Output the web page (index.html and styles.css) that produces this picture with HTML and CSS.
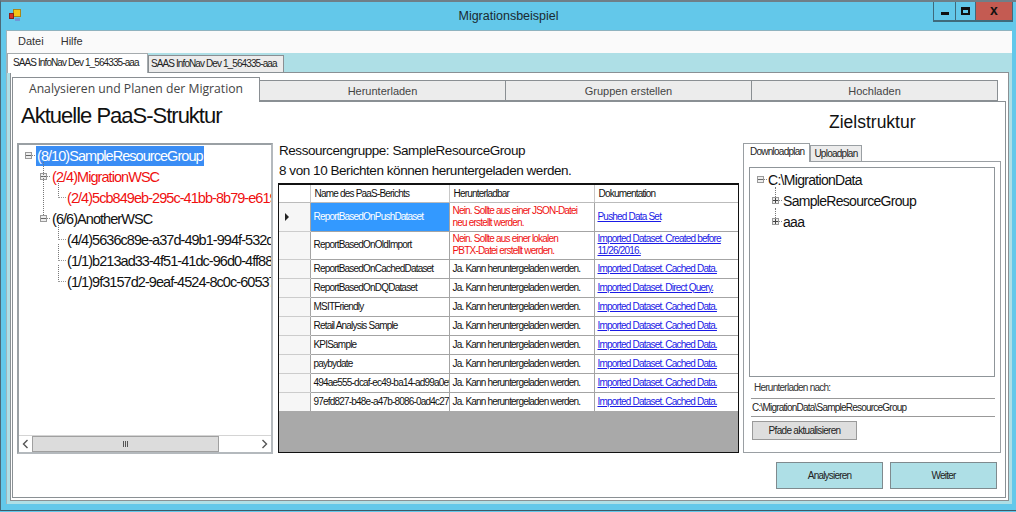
FILE: index.html
```html
<!DOCTYPE html>
<html lang="de">
<head>
  <meta charset="UTF-8" />
  <title>Migrationsbeispiel</title>
  <link rel="stylesheet" href="styles.css">
</head>
<body>

<div class="window">
  <div class="titlebar">
    <svg class="app-icon" width="14" height="14" viewBox="0 0 14 14">
      <rect x="5.5" y="1.5" width="7" height="7" fill="#f5c518" stroke="#a8861a"/>
      <rect x="1.5" y="5.5" width="4" height="5" fill="#d8322a" stroke="#8a1f1a"/>
      <rect x="7" y="10" width="5" height="3" fill="#6f97d8"/>
    </svg>
    <div class="title">Migrationsbeispiel</div>
    <div class="controls">
      <div class="ctl ctl-min"><span class="min-glyph"></span></div>
      <div class="ctl ctl-max"><span class="max-glyph"></span></div>
      <div class="ctl ctl-close">x</div>
    </div>
  </div>

  <div class="client">
    <div class="menubar">
      <span>Datei</span>
      <span>Hilfe</span>
    </div>

    <div class="outer-tabs">
      <div class="otab active">SAAS InfoNav Dev 1_564335-aaa</div>
      <div class="otab">SAAS InfoNav Dev 1_564335-aaa</div>
    </div>

    <div class="outer-page">
      <div class="inner-tabs">
        <div class="itab active">Analysieren und Planen der Migration</div>
        <div class="itab">Herunterladen</div>
        <div class="itab">Gruppen erstellen</div>
        <div class="itab">Hochladen</div>
      </div>

      <div class="inner-page">
        <div class="columns">
          <!-- left tree -->
          <div class="col-left">
            <h1 class="heading">Aktuelle PaaS-Struktur</h1>
            <div class="tree-box">
              <div class="tree">
                <div class="node lvl0"><span class="exp minus"></span><span class="label selected">(8/10)SampleResourceGroup</span></div>
                <div class="node lvl1 red"><span class="exp minus"></span><span class="label">(2/4)MigrationWSC</span></div>
                <div class="node lvl2 red"><span class="label">(2/4)5cb849eb-295c-41bb-8b79-e6197a2c10d4</span></div>
                <div class="node lvl1 tall"><span class="exp minus"></span><span class="label">(6/6)AnotherWSC</span></div>
                <div class="node lvl2"><span class="label">(4/4)5636c89e-a37d-49b1-994f-532d8e10b7c2</span></div>
                <div class="node lvl2"><span class="label">(1/1)b213ad33-4f51-41dc-96d0-4ff88c3e21a9</span></div>
                <div class="node lvl2"><span class="label">(1/1)9f3157d2-9eaf-4524-8c0c-60537b1de44f</span></div>
              </div>
              <div class="hscroll">
                <div class="sb-btn"><svg width="7" height="10" viewBox="0 0 7 10"><path d="M5.5 1 L1.5 5 L5.5 9" fill="none" stroke="#555" stroke-width="1.4"/></svg></div>
                <div class="sb-thumb"><span></span><span></span><span></span></div>
                <div class="sb-track"></div>
                <div class="sb-btn"><svg width="7" height="10" viewBox="0 0 7 10"><path d="M1.5 1 L5.5 5 L1.5 9" fill="none" stroke="#555" stroke-width="1.4"/></svg></div>
              </div>
            </div>
          </div>

          <!-- middle report grid -->
          <div class="col-mid">
            <p class="info">Ressourcengruppe: SampleResourceGroup</p>
            <p class="info">8 von 10 Berichten können heruntergeladen werden.</p>
            <div class="grid-box">
              <table class="grid">
                <colgroup><col class="c0"><col class="c1"><col class="c2"><col class="c3"></colgroup>
                <thead>
                  <tr class="h17"><th></th><th>Name des PaaS-Berichts</th><th>Herunterladbar</th><th>Dokumentation</th></tr>
                </thead>
                <tbody>
                  <tr class="h29"><td class="rowhead"><span class="pointer"></span></td><td class="sel">ReportBasedOnPushDataset</td><td class="no">Nein. Sollte aus einer JSON-Datei<br>neu erstellt werden.</td><td><a href="#">Pushed Data Set </a></td></tr>
                  <tr class="h28"><td class="rowhead"></td><td>ReportBasedOnOldImport</td><td class="no">Nein. Sollte aus einer lokalen<br>PBTX-Datei erstellt werden.</td><td><a href="#">Imported Dataset. Created before 11/26/2016.</a></td></tr>
                  <tr class="h19"><td class="rowhead"></td><td>ReportBasedOnCachedDataset</td><td>Ja. Kann heruntergeladen werden.</td><td><a href="#">Imported Dataset. Cached Data.</a></td></tr>
                  <tr class="h19"><td class="rowhead"></td><td>ReportBasedOnDQDataset</td><td>Ja. Kann heruntergeladen werden.</td><td><a href="#">Imported Dataset. Direct Query.</a></td></tr>
                  <tr class="h19"><td class="rowhead"></td><td>MSITFriendly</td><td>Ja. Kann heruntergeladen werden.</td><td><a href="#">Imported Dataset. Cached Data.</a></td></tr>
                  <tr class="h19"><td class="rowhead"></td><td>Retail Analysis Sample</td><td>Ja. Kann heruntergeladen werden.</td><td><a href="#">Imported Dataset. Cached Data.</a></td></tr>
                  <tr class="h19"><td class="rowhead"></td><td>KPISample</td><td>Ja. Kann heruntergeladen werden.</td><td><a href="#">Imported Dataset. Cached Data.</a></td></tr>
                  <tr class="h19"><td class="rowhead"></td><td>paybydate</td><td>Ja. Kann heruntergeladen werden.</td><td><a href="#">Imported Dataset. Cached Data.</a></td></tr>
                  <tr class="h19"><td class="rowhead"></td><td>494ae555-dcaf-ec49-ba14-ad99a0ef12c3</td><td>Ja. Kann heruntergeladen werden.</td><td><a href="#">Imported Dataset. Cached Data.</a></td></tr>
                  <tr class="h19"><td class="rowhead"></td><td>97efd827-b48e-a47b-8086-0ad4c27e93b1</td><td>Ja. Kann heruntergeladen werden.</td><td><a href="#">Imported Dataset. Cached Data.</a></td></tr>
                </tbody>
              </table>
            </div>
          </div>

          <!-- right plan -->
          <div class="col-right">
            <h2 class="heading-small">Zielstruktur</h2>
            <div class="plan-tabs">
              <div class="ptab active">Downloadplan</div>
              <div class="ptab">Uploadplan</div>
            </div>
            <div class="plan-page">
              <div class="plan-tree">
                <div class="pnode p0"><span class="exp minus"></span><span>C:\MigrationData</span></div>
                <div class="pnode p1"><span class="exp plus"></span><span>SampleResourceGroup</span></div>
                <div class="pnode p1"><span class="exp plus"></span><span>aaa</span></div>
              </div>
              <div class="field-label">Herunterladen nach:</div>
              <div class="path-input">C:\MigrationData\SampleResourceGroup</div>
              <button class="refresh">Pfade aktualisieren</button>
            </div>
          </div>
        </div>

        <div class="actions">
          <button class="action">Analysieren</button>
          <button class="action">Weiter</button>
        </div>
      </div>
    </div>
  </div>
</div>

</body>
</html>
```

FILE: styles.css
```css
* {
  box-sizing: border-box;
}

html, body {
  margin: 0;
  height: 512px;
  overflow: hidden;
}

body {
  font-family: "Liberation Sans", Arial, sans-serif;
  background: #63c8ea;
  color: #111;
}

.window {
  width: 1016px;
  height: 511px;
  border-top: 2px solid #6f7f88;
  border-left: 1px solid #4b6a78;
  border-bottom: 1px solid #3c5a68;
  padding-bottom: 6px;
  display: flex;
  flex-direction: column;
}

/* title bar */
.titlebar {
  height: 28px;
  display: grid;
  grid-template-columns: 1fr auto 1fr;
  align-items: start;
  flex: none;
}

.app-icon {
  margin: 6px 0 0 7px;
}

.title {
  font-size: 12.5px;
  line-height: 28px;
  color: #1a2a30;
}

.controls {
  justify-self: end;
  display: flex;
  height: 20px;
  margin-right: 3px;
  border: 1px solid #3f6a7c;
  border-top: none;
  border-bottom-width: 2px;
}

.ctl {
  display: flex;
  align-items: center;
  justify-content: center;
  height: 100%;
}

.ctl-min {
  width: 22px;
  border-right: 1px solid #3f6a7c;
}

.ctl-max {
  width: 20px;
  border-right: 1px solid #3f6a7c;
}

.ctl-close {
  width: 36px;
  background: #c45b52;
  font-weight: bold;
  font-size: 14px;
  color: #111;
  padding-bottom: 3px;
}

.min-glyph {
  width: 8px;
  height: 3px;
  margin-top: 5px;
  background: #111;
}

.max-glyph {
  width: 9px;
  height: 8px;
  border: 2px solid #111;
  border-top-width: 3px;
}

/* client */
.client {
  flex: 1;
  margin: 0 4px 0 5px;
  background: #aedfe6;
  border-left: 1px solid #9fb4ba;
  display: flex;
  flex-direction: column;
}

.menubar {
  height: 23px;
  background: #fafafa;
  border-top: 1px solid #8fb3bf;
  display: flex;
  gap: 17px;
  padding: 4px 0 0 11px;
  font-size: 11px;
  color: #333;
  flex: none;
}

.outer-tabs {
  display: flex;
  height: 19px;
  flex: none;
  position: relative;
  z-index: 1;
}

.otab {
  width: 136px;
  height: 17px;
  margin-top: 2px;
  background: #ececec;
  border: 1px solid #8a8f93;
  border-bottom: none;
  font-size: 10px;
  letter-spacing: -0.9px;
  line-height: 16px;
  padding-left: 2px;
  white-space: nowrap;
  color: #222;
}

.otab.active {
  width: 141px;
  height: 20px;
  margin-top: 0;
  background: #fff;
  border-color: #a5abae;
  padding-left: 5px;
  line-height: 17px;
}

.outer-page {
  flex: 1;
  margin: 0 3px 3px 3px;
  background: #fff;
  border: 1px solid #8a9094;
  padding: 4px 2px 2px 1px;
  display: flex;
  flex-direction: column;
}

.inner-tabs {
  display: flex;
  flex: none;
  height: 24px;
  position: relative;
  z-index: 1;
}

.itab {
  width: 246px;
  height: 21px;
  margin-top: 3px;
  background: #ececec;
  border: 1px solid #8a8f93;
  border-left: none;
  font-size: 11px;
  line-height: 20px;
  text-align: center;
  color: #444;
}

.itab.active {
  width: 248px;
  height: 25px;
  margin-top: 0;
  background: #fff;
  border-left: 1px solid #8a8f93;
  border-bottom: none;
  font-family: "Open Sans", sans-serif;
  font-size: 12.2px;
  line-height: 22px;
}

.inner-page {
  flex: 1;
  background: #fff;
  border: 1px solid #8a9094;
  padding: 0 3px 7px 4px;
  display: flex;
  flex-direction: column;
}

.columns {
  flex: 1;
  display: grid;
  grid-template-columns: 256px 461px 258px;
  gap: 0 5px;
}

/* left */
.heading {
  margin: 0;
  height: 41px;
  padding: 0 0 0 4px;
  font-size: 22px;
  letter-spacing: -1px;
  line-height: 28px;
  font-weight: normal;
  color: #111;
}

.tree-box {
  height: 311px;
  border: 2px solid #b4b9bd;
  border-top-color: #9aa0a4;
  border-left-color: #9aa0a4;
  display: flex;
  flex-direction: column;
}

.tree {
  flex: 1;
  overflow: hidden;
}

.node {
  position: relative;
  height: 21px;
  display: flex;
  align-items: center;
  font-size: 14.5px;
  white-space: nowrap;
  letter-spacing: -0.95px;
}

.lvl0 { padding-left: 6px; }
.lvl1 { padding-left: 21px; }
.lvl2 { padding-left: 47px; }
.red { color: #f01010; }

.exp {
  position: relative;
  width: 7px;
  height: 7px;
  flex: none;
  margin-right: 4px;
  border: 1px solid #9a9a9a;
  background: linear-gradient(#666, #666) center / 5px 1px no-repeat, #eee;
}

.exp.plus {
  background: linear-gradient(#444, #444) center / 5px 1px no-repeat, linear-gradient(#444, #444) center / 1px 5px no-repeat, #eee;
}

/* short dotted stub between an expander and its label */
.exp::after {
  content: "";
  position: absolute;
  left: 6px;
  top: 2px;
  width: 3px;
  border-top: 1px dotted #888;
}

.label {
  display: inline-block;
  line-height: 20px;
  padding: 0 1px;
}

.label.selected {
  background: #3a8df5;
  color: #fff;
}

/* dotted tree guides lie over the rows */
.lvl1::before {
  content: "";
  position: absolute;
  left: 24px;
  top: -4px;
  height: 11px;
  border-left: 1px dotted #777;
}

.tall::before {
  top: -46px;
  height: 53px;
}

.lvl2::before {
  content: "";
  position: absolute;
  left: 39px;
  top: -6px;
  height: 16px;
  width: 7px;
  border-left: 1px dotted #777;
  border-bottom: 1px dotted #999;
}

.hscroll {
  flex: none;
  height: 17px;
  display: flex;
  background: #fff;
  border-top: 1px solid #d4d4d4;
}

.sb-btn {
  width: 13px;
  display: flex;
  align-items: center;
  justify-content: center;
}

.sb-thumb {
  width: 187px;
  background: #dcdcdc;
  border: 1px solid #a0a0a0;
  display: flex;
  gap: 1px;
  align-items: center;
  justify-content: center;
}

.sb-thumb span {
  width: 1px;
  height: 6px;
  background: #555;
}

.sb-track {
  flex: 1;
}

/* middle */
.col-mid {
  padding-top: 39px;
}

.info {
  margin: 0 0 0 1px;
  height: 20px;
  font-size: 13.5px;
  letter-spacing: -0.45px;
  line-height: 20px;
  color: #111;
}

.grid-box {
  margin-top: 2px;
  width: 461px;
  height: 270px;
  background: #a9a9a9;
  border: 1px solid #111;
  border-top-width: 2px;
  overflow: hidden;
}

.grid {
  width: 459px;
  table-layout: fixed;
  border-collapse: collapse;
  background: #fff;
  font-size: 10px;
  letter-spacing: -0.8px;
}

.c0 { width: 31px; }
.c1 { width: 139px; }
.c2 { width: 145px; }
.c3 { width: 144px; }

.h17 { height: 17px; }
.h19 { height: 19px; }
.h28 { height: 28px; }
.h29 { height: 29px; }

.grid th {
  font-weight: normal;
  text-align: left;
  padding: 0 4px;
  background: #fff;
  border-right: 1px solid #c8c8c8;
  border-bottom: 1px solid #bbb;
  color: #111;
}

.grid td {
  padding: 0 3px;
  border-right: 1px solid #a4a4a4;
  border-bottom: 1px solid #a4a4a4;
  line-height: 12px;
  white-space: nowrap;
  overflow: hidden;
  color: #111;
}

.grid td:last-child {
  white-space: normal;
  padding-left: 3px;
  border-right: none;
}

.grid tr:last-child td {
  border-bottom: none;
}

.grid td.rowhead {
  background: #f6f6f6;
  border-bottom-color: #ccc;
}

.grid td.sel {
  background: #3399ff;
  color: #fff;
}

.grid td.no {
  color: #f01010;
}

.grid a {
  color: #1a1ae6;
}

.pointer {
  display: block;
  margin-left: 3px;
  width: 0;
  height: 0;
  border-left: 4px solid #222;
  border-top: 4px solid transparent;
  border-bottom: 4px solid transparent;
}

/* right */
.col-right {
  margin-left: -1px;
}

.heading-small {
  margin: 0;
  height: 41px;
  padding: 7px 0 0 86px;
  font-size: 17.5px;
  line-height: 26px;
  font-weight: normal;
}

.plan-tabs {
  display: flex;
  height: 18px;
  position: relative;
  z-index: 1;
}

.ptab {
  height: 16px;
  margin-top: 2px;
  padding: 0 3px;
  background: #ececec;
  border: 1px solid #9a9fa3;
  border-bottom: none;
  font-size: 10px;
  letter-spacing: -0.75px;
  line-height: 15px;
  color: #222;
}

.ptab.active {
  height: 19px;
  margin-top: 0;
  padding: 0 5px 0 6px;
  background: #fff;
  line-height: 15px;
}

.plan-page {
  width: 258px;
  height: 292px;
  background: #fff;
  border: 1px solid #9a9fa3;
  padding: 5px 5px 0 5px;
}

.plan-tree {
  height: 210px;
  border: 1px solid #8f9599;
  padding-top: 1px;
  margin-bottom: 5px;
}

.pnode {
  position: relative;
  height: 21px;
  display: flex;
  align-items: center;
  font-size: 14px;
  letter-spacing: -0.7px;
  color: #111;
}

.p0 { padding-left: 7px; }
.p1 { padding-left: 22px; }

.p1::before {
  content: "";
  position: absolute;
  left: 25px;
  top: -3px;
  height: 10px;
  border-left: 1px dotted #777;
}

.field-label {
  font-size: 10px;
  letter-spacing: -0.75px;
  line-height: 12px;
  padding-left: 5px;
  color: #333;
}

.path-input {
  margin: 4px 0 4px 2px;
  height: 19px;
  padding-left: 1px;
  border-top: 1px solid #999;
  border-bottom: 1px solid #999;
  font-size: 10px;
  letter-spacing: -0.78px;
  line-height: 17px;
  color: #222;
}

.refresh {
  display: block;
  margin-left: 3px;
  width: 105px;
  height: 19px;
  padding: 0;
  background: #dedede;
  border: 1px solid #9a9a9a;
  font: 10px "Liberation Sans", Arial, sans-serif;
  letter-spacing: -0.7px;
  color: #222;
}

.actions {
  flex: none;
  display: flex;
  justify-content: flex-end;
  gap: 7px;
  padding-right: 5px;
  height: 28px;
  margin-top: 8px;
}

.action {
  width: 107px;
  height: 27px;
  padding: 0;
  background: #aedfe6;
  border: 1px solid #7f8a8e;
  font: 10px "Liberation Sans", Arial, sans-serif;
  letter-spacing: -0.8px;
  color: #222;
}
```
